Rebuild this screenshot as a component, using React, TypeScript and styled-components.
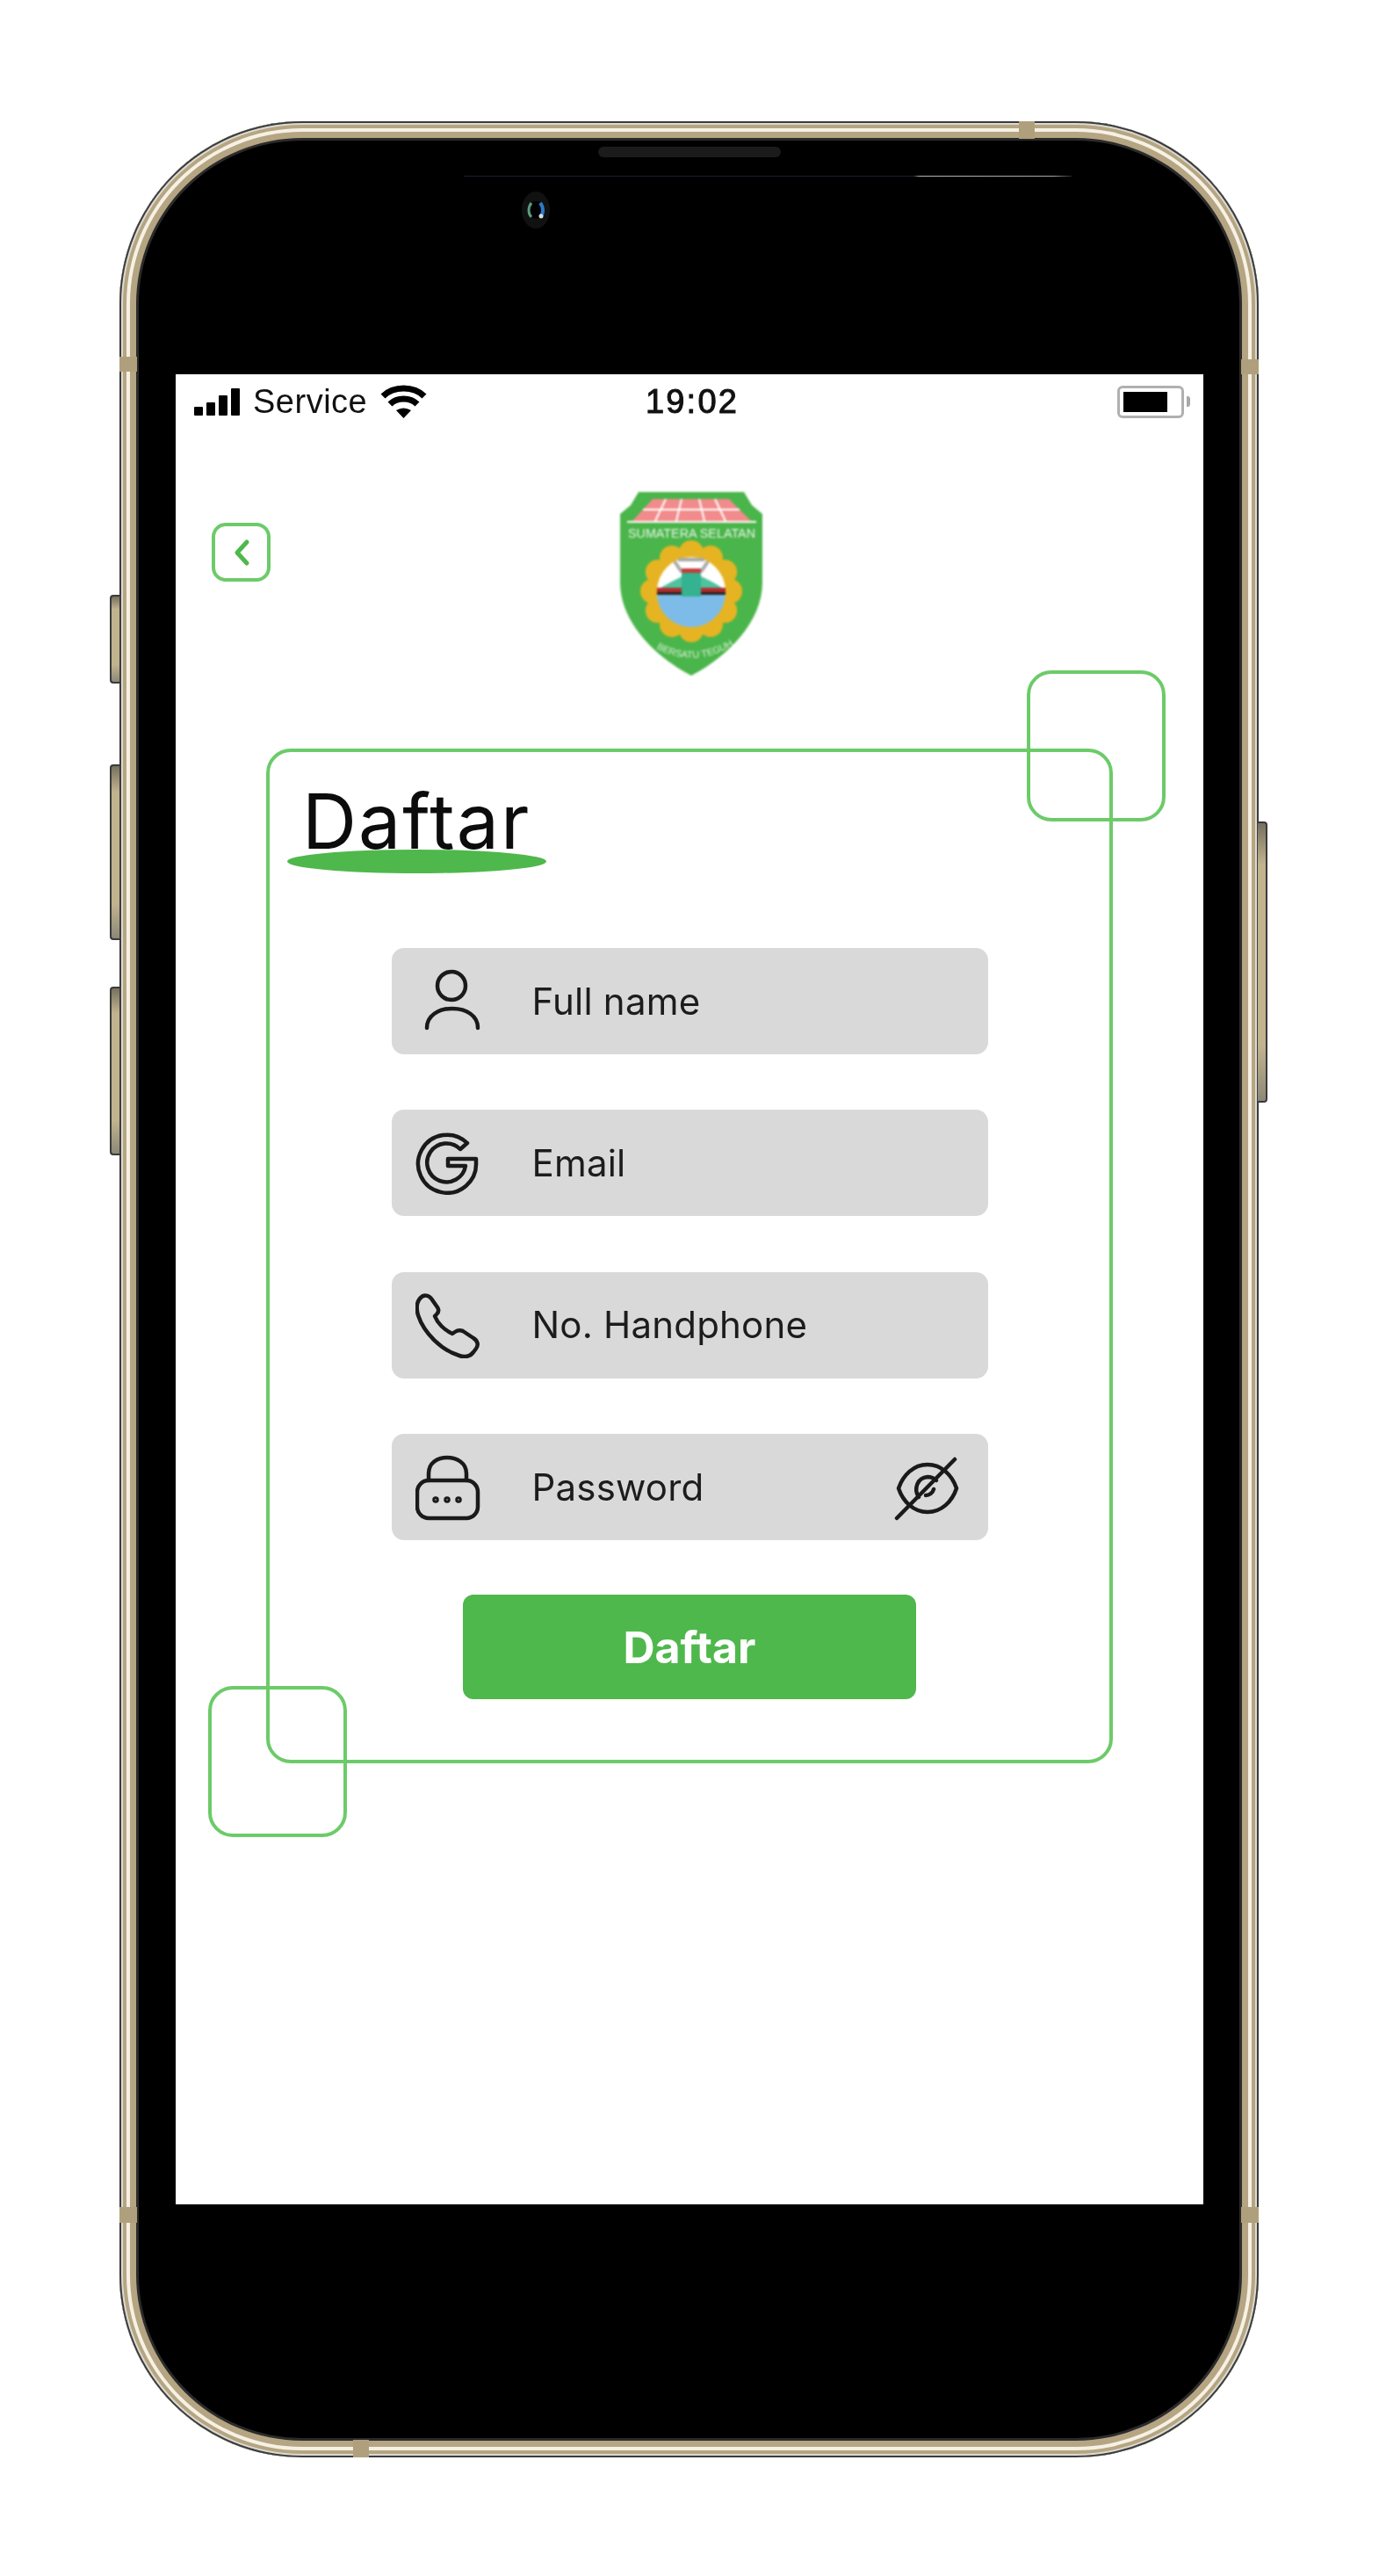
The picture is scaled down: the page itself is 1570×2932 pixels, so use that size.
// App.tsx
import React from "react";
import styled, { createGlobalStyle } from "styled-components";

const GlobalStyle = createGlobalStyle`
  html, body {
    margin: 0;
    background: #fff;
  }
  * {
    box-sizing: border-box;
  }
`;

const GREEN = "#4fb84c";
const LINE_GREEN = "#6ccb69";
const GOLD = "#b5a582";

const Page = styled.div`
  width: 1570px;
  height: 2932px;
  padding: 138px 0 0 136px;
  background: #fff;
  overflow: hidden;
`;

const Phone = styled.div`
  position: relative;
  width: 1297px;
  height: 2659px;
  padding: 288px 63px 288px 64px;
  background: #000;
  border-radius: 208px;
  box-shadow:
    inset 0 0 0 2px #3a3c3e,
    inset 0 0 0 4px #dcd9d0,
    inset 0 0 0 8px ${GOLD},
    inset 0 0 0 12px #f6f1e4,
    inset 0 0 0 19px ${GOLD},
    inset 0 0 0 22px #2b2b2b;
`;

const SideButton = styled.div<{ $top: number; $height: number; $right?: boolean }>`
  position: absolute;
  top: ${(p) => p.$top}px;
  height: ${(p) => p.$height}px;
  width: 11px;
  ${(p) => (p.$right ? "right: -10px;" : "left: -11px;")}
  border: 2px solid #3a3a3a;
  ${(p) => (p.$right ? "border-left: none;" : "border-right: none;")}
  border-radius: ${(p) => (p.$right ? "0 4px 4px 0" : "4px 0 0 4px")};
  background: linear-gradient(180deg, #77705f 0%, #c2b38f 15%, #c2b38f 80%, #8d8877 100%);
`;

const Band = styled.div<{ $x: number; $y: number; $w: number; $h: number }>`
  position: absolute;
  left: ${(p) => p.$x}px;
  top: ${(p) => p.$y}px;
  width: ${(p) => p.$w}px;
  height: ${(p) => p.$h}px;
  background: #b09f7c;
`;

const Speaker = styled.div`
  position: absolute;
  left: 545px;
  top: 29px;
  width: 208px;
  height: 12px;
  border-radius: 6px;
  background: #1b1b1b;
`;

const GlassLine = styled.div`
  position: absolute;
  left: 392px;
  top: 62px;
  width: 692px;
  height: 1px;
  background: linear-gradient(90deg, #1a2030 0%, #1a2030 74%, #b9b6ae 75%, #a9a69e 97%, #222 100%);
`;

const Camera = styled.svg`
  position: absolute;
  left: 452px;
  top: 79px;
  width: 44px;
  height: 44px;
`;

const Screen = styled.div`
  width: 1170px;
  height: 2083px;
  background: #fff;
`;

const StatusBar = styled.div`
  display: grid;
  grid-template-columns: 1fr auto 1fr;
  align-items: center;
  height: 62px;
  padding: 0 15px 0 21px;
  filter: blur(0.7px);
  font-family: "Liberation Sans", Arial, sans-serif;
  color: #111;
`;

const StatusLeft = styled.div`
  display: flex;
  align-items: center;
`;

const SignalBars = styled.div`
  display: flex;
  align-items: flex-end;
  gap: 4px;
  height: 31px;
  margin-right: 15px;
`;

const SignalBar = styled.span<{ $h: number }>`
  display: block;
  width: 10px;
  height: ${(p) => p.$h}px;
  background: #000;
  border-radius: 1px;
`;

const ServiceText = styled.span`
  font-size: 38px;
  line-height: 44px;
  letter-spacing: 0.5px;
  margin-right: 15px;
`;

const Clock = styled.span`
  font-size: 38px;
  line-height: 44px;
  letter-spacing: 2.2px;
  -webkit-text-stroke: 1px #111;
`;

const BatteryWrap = styled.div`
  display: flex;
  align-items: center;
  justify-content: flex-end;
`;

const BatteryBody = styled.div`
  width: 76px;
  height: 37px;
  padding: 4px;
  border: 3px solid #b0b0b0;
  border-radius: 6px;
`;

const BatteryFill = styled.div`
  width: 50px;
  height: 100%;
  background: #000;
`;

const BatteryTip = styled.div`
  width: 4px;
  height: 12px;
  margin-left: 3px;
  border-radius: 0 3px 3px 0;
  background: #a8a8a8;
`;

const Header = styled.div`
  display: grid;
  grid-template-columns: 506px 163px 1fr;
  margin-top: 71px;
`;

const BackButton = styled.button`
  display: flex;
  align-items: center;
  justify-content: center;
  width: 67px;
  height: 67px;
  margin: 36px 0 0 41px;
  padding: 0;
  background: #fff;
  border: 4px solid ${LINE_GREEN};
  border-radius: 16px;
`;

const Logo = styled.svg`
  display: block;
  width: 163px;
  height: 210px;
  filter: blur(1px);
`;

const Card = styled.div`
  position: relative;
  width: 964px;
  height: 1155px;
  margin: 83px 0 0 103px;
  border: 4px solid ${LINE_GREEN};
  border-radius: 28px;
`;

const Corner = styled.div`
  position: absolute;
  width: 158px;
  height: 172px;
  border: 4px solid ${LINE_GREEN};
  border-radius: 28px;
`;

const CornerTop = styled(Corner)`
  top: -93px;
  right: -64px;
`;

const CornerBottom = styled(Corner)`
  left: -70px;
  bottom: -88px;
`;

const Heading = styled.h1`
  margin: 36px 0 0 37px;
  font-family: Inter, "Liberation Sans", sans-serif;
  font-size: 86px;
  font-weight: 400;
  line-height: 1;
  letter-spacing: 2px;
  color: #0c0c0c;
  filter: blur(0.5px);
`;

const HeadingUnderline = styled.div`
  width: 295px;
  height: 27px;
  margin: -11px 0 0 20px;
  border-radius: 50%;
  background: ${GREEN};
`;

const Form = styled.div`
  display: flex;
  flex-direction: column;
  align-items: center;
  gap: 62px;
  margin-top: 85px;
`;

const FieldList = styled.div`
  display: flex;
  flex-direction: column;
  gap: 63.4px;
`;

const Field = styled.div`
  display: flex;
  align-items: center;
  width: 679px;
  height: 121px;
  padding: 0 31px 0 27px;
  background: #d9d9d9;
  border-radius: 14px;
`;

const FieldIcon = styled.svg`
  flex: none;
  width: 76px;
  height: 76px;
  fill: none;
  stroke: #1a1a1a;
  stroke-width: 4.5;
  stroke-linecap: round;
  stroke-linejoin: round;
  filter: blur(0.4px);
`;

const FieldLabel = styled.span`
  flex: 1;
  margin-left: 57px;
  font-family: Inter, "Liberation Sans", sans-serif;
  font-size: 42px;
  line-height: 48px;
  letter-spacing: 0.2px;
  color: #1c1c1c;
  filter: blur(0.4px);
`;

const SubmitButton = styled.button`
  width: 516px;
  height: 119px;
  border: none;
  border-radius: 12px;
  background: ${GREEN};
  color: #fff;
  font-family: Inter, "Liberation Sans", sans-serif;
  font-size: 50px;
  font-weight: 700;
`;

const petals = Array.from({ length: 12 }, (_, i) => {
  const a = (i * Math.PI) / 6;
  return { x: 81 + Math.sin(a) * 44, y: 114 - Math.cos(a) * 44 };
});

const ShieldLogo = () => (
  <Logo viewBox="0 0 163 210">
    <path
      d="M21 1H141L150 16L162 26V104C162 150 120 190 81 210C42 190 0 150 0 104V26L12 16Z"
      fill="#4ab54a"
    />
    <path d="M37 9H124L149 34H14Z" fill="#f28b8b" />
    <path
      d="M26 21H136M52 9L40 34M70 9L64 34M90 9L96 34M108 9L120 34"
      stroke="#fff"
      strokeWidth="2"
      fill="none"
    />
    <path d="M8 35H155" stroke="#fff" strokeWidth="2" />
    <text
      x="9"
      y="53"
      fill="#e8f6e8"
      fontFamily="Liberation Sans, sans-serif"
      fontSize="15"
      textLength="145"
      lengthAdjust="spacingAndGlyphs"
    >
      SUMATERA SELATAN
    </text>
    <circle cx="81" cy="114" r="50" fill="#e6b422" />
    {petals.map((pt, i) => (
      <circle key={i} cx={pt.x} cy={pt.y} r="14" fill="#e6b422" />
    ))}
    <circle cx="81" cy="114" r="39" fill="#fff" />
    <path d="M43 112C55 104 66 100 72 96H90C98 100 108 104 119 112Z" fill="#4fc2a0" />
    <path d="M42 116a39 39 0 0 0 78 0Z" fill="#7dbce8" />
    <rect x="42" y="110" width="78" height="5" fill="#b52a2a" />
    <rect x="42" y="115" width="78" height="3" fill="#222" />
    <path d="M62 80L70 92M100 80L92 92M66 78H96" stroke="#aaa" strokeWidth="4" fill="none" />
    <rect x="70" y="92" width="22" height="28" fill="#35b28f" />
    <path d="M70 88h22v5H70z" fill="#c43b3b" />
    <path id="mottoCurve" d="M36 176Q81 204 128 176" fill="none" />
    <text fill="#d9f2d9" fontFamily="Liberation Sans, sans-serif" fontSize="11">
      <textPath href="#mottoCurve" startOffset="6">
        BERSATU TEGUH
      </textPath>
    </text>
  </Logo>
);

const PersonIcon = () => (
  <FieldIcon viewBox="0 0 76 76">
    <circle cx="41" cy="20" r="16" />
    <path d="M13 68C13 54 26 46 42 46C58 46 71 54 71 68" />
  </FieldIcon>
);

const GoogleIcon = () => (
  <FieldIcon viewBox="0 0 76 76">
    <path d="M59 15A33 33 0 1 0 69 37L69 33L37 33L37 41L57 41A22 22 0 1 1 51 22L59 15Z" />
  </FieldIcon>
);

const PhoneIcon = () => (
  <FieldIcon viewBox="0 0 76 76">
    <path d="M5 8C9 3 15 4 18 8L25 18C27 21 26 24 24 26L22 28C25 36 33 44 42 48L45 46C48 44 51 44 54 45L66 53C71 56 72 61 69 65L66 69C62 74 56 75 50 73C30 67 10 48 3 27C1 20 1 13 5 8Z" />
  </FieldIcon>
);

const LockIcon = () => (
  <FieldIcon viewBox="0 0 76 76">
    <path d="M15 30V22C15 10 25 4 36 4C47 4 58 10 58 22V30" />
    <rect x="2" y="30" width="69" height="43" rx="13" />
    <circle cx="23" cy="52" r="1.5" />
    <circle cx="36" cy="52" r="1.5" />
    <circle cx="49" cy="52" r="1.5" />
  </FieldIcon>
);

const EyeOffIcon = () => (
  <FieldIcon viewBox="0 0 76 76">
    <path d="M5 39C10 24 22 12 38 12C54 12 66 24 71 39C66 54 54 66 38 66C22 66 10 54 5 39Z" />
    <path d="M28 49C22 40 26 27 38 26C42 26 46 28 48 30" />
    <path d="M69 6L3 73M36 47C40 47 44 44 45 40" />
  </FieldIcon>
);

const App = () => {
  return (
    <Page>
      <GlobalStyle />
      <Phone>
        <SideButton $top={539} $height={101} />
        <SideButton $top={732} $height={200} />
        <SideButton $top={985} $height={192} />
        <SideButton $right $top={797} $height={320} />

        <Band $x={1024} $y={0} $w={18} $h={20} />
        <Band $x={0} $y={268} $w={20} $h={17} />
        <Band $x={1277} $y={271} $w={20} $h={17} />
        <Band $x={0} $y={2374} $w={20} $h={18} />
        <Band $x={1277} $y={2374} $w={20} $h={18} />
        <Band $x={266} $y={2639} $w={18} $h={20} />

        <Speaker />
        <GlassLine />
        <Camera viewBox="0 0 44 44">
          <ellipse cx="22" cy="22" rx="16" ry="21" fill="#101212" />
          <circle cx="22" cy="22" r="10" fill="#000" />
          <path d="M17 14C13 19 13 26 17 30" stroke="#5f9a80" strokeWidth="3" fill="none" />
          <path d="M27 14C31 19 31 26 27 30" stroke="#2a7cc9" strokeWidth="4" fill="none" />
          <circle cx="28" cy="29" r="2.5" fill="#ddd" />
        </Camera>

        <Screen>
          <StatusBar>
            <StatusLeft>
              <SignalBars>
                <SignalBar $h={10} />
                <SignalBar $h={15} />
                <SignalBar $h={23} />
                <SignalBar $h={31} />
              </SignalBars>
              <ServiceText>Service</ServiceText>
              <svg width="53" height="38" viewBox="0 0 53 38">
                <path
                  d="M3 13C15 1 38 1 50 13M11 22C19 14 34 14 42 22"
                  stroke="#000"
                  strokeWidth="7"
                  fill="none"
                />
                <path d="M18 29Q26.5 24 35 29L26.5 38Z" fill="#000" />
              </svg>
            </StatusLeft>
            <Clock>19:02</Clock>
            <BatteryWrap>
              <BatteryBody>
                <BatteryFill />
              </BatteryBody>
              <BatteryTip />
            </BatteryWrap>
          </StatusBar>

          <Header>
            <BackButton>
              <svg width="24" height="34" viewBox="0 0 24 34">
                <path
                  d="M18 5L7 17L18 29"
                  stroke={GREEN}
                  strokeWidth="5"
                  strokeLinecap="round"
                  strokeLinejoin="round"
                  fill="none"
                />
              </svg>
            </BackButton>
            <ShieldLogo />
          </Header>

          <Card>
            <CornerTop />
            <CornerBottom />
            <Heading>Daftar</Heading>
            <HeadingUnderline />
            <Form>
              <FieldList>
                <Field>
                  <PersonIcon />
                  <FieldLabel>Full name</FieldLabel>
                </Field>
                <Field>
                  <GoogleIcon />
                  <FieldLabel>Email</FieldLabel>
                </Field>
                <Field>
                  <PhoneIcon />
                  <FieldLabel>No. Handphone</FieldLabel>
                </Field>
                <Field>
                  <LockIcon />
                  <FieldLabel>Password</FieldLabel>
                  <EyeOffIcon />
                </Field>
              </FieldList>
              <SubmitButton>Daftar</SubmitButton>
            </Form>
          </Card>
        </Screen>
      </Phone>
    </Page>
  );
};

export default App;
